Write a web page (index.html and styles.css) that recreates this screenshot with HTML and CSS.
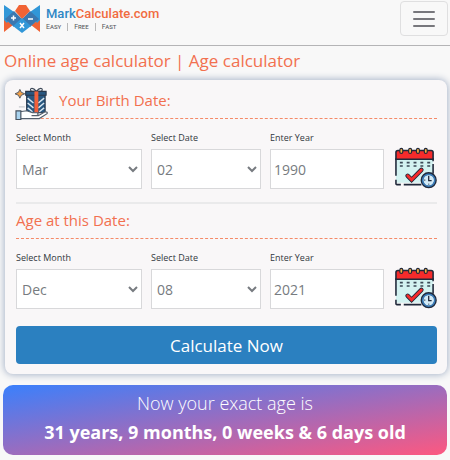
FILE: index.html
```html
<!DOCTYPE html>
<html lang="en">
<head>
    <meta charset="UTF-8">
    <meta name="viewport" content="width=device-width, initial-scale=1.0">
    <title>Online age calculator | Age calculator</title>
    <link rel="stylesheet" href="styles.css">
</head>
<body>
    <svg class="sprite" aria-hidden="true">
        <symbol id="calendar" viewBox="0 0 44 42">
            <path d="M2 8h38v28H2z" fill="#d3f2f1"/>
            <path d="M2 29V11M2 33v4q0 1 1 1h4M10 38h18M40 11v3M40 17v10" fill="none" stroke="#20283a" stroke-width="1.6"/>
            <path d="M2 12V5q0-2 2-2h34q2 0 2 2v7z" fill="#f52b2b" stroke="#20283a" stroke-width="1.6"/>
            <g fill="#f4ad3d" stroke="#20283a" stroke-width="1.2">
                <rect x="6" y="1" width="3" height="5" rx="1.5"/>
                <rect x="15" y="1" width="3" height="5" rx="1.5"/>
                <rect x="23" y="1" width="3" height="5" rx="1.5"/>
                <rect x="31" y="1" width="3" height="5" rx="1.5"/>
            </g>
            <path d="M6 15.500h31M6 19h31" stroke="#3b4856" stroke-width="1.600" stroke-dasharray="3 4"/>
            <path d="M14 29l4 4 10-10" fill="none" stroke="#20283a" stroke-width="4.600" stroke-linecap="round"/>
            <path d="M14 29l4 4 10-10" fill="none" stroke="#f52b2b" stroke-width="2.800" stroke-linecap="round"/>
            <circle cx="35.500" cy="33.500" r="7" fill="#d3ebf7" stroke="#20283a" stroke-width="2.600"/>
            <circle cx="35.500" cy="33.500" r="6.200" fill="none" stroke="#397cb9" stroke-width="1.600"/>
            <path d="M35.500 29v5h3M31 33.500h1M35.500 37v1" fill="none" stroke="#20283a" stroke-width="1.300"/>
        </symbol>
    </svg>

    <header class="navbar">
        <a class="brand" href="#" aria-label="MarkCalculate.com">
            <svg class="brand-logo" viewBox="0 0 36 28" aria-hidden="true">
                <path d="M0 14v13l9-7zM36 14v13l-9-7z" fill="#f16334"/>
                <path d="M0 0v15l3 3 7-11zM36 0v15l-3 3-7-11z" fill="#3197d8"/>
                <path d="M10 6L1 14l9 8 8-8zM26 6l9 8-9 8-8-8z" fill="#3b78b0"/>
                <path d="M11 6l4-6h7l4 6-8 8z" fill="#f16334"/>
                <path d="M18 13L9 21l9 7 9-7z" fill="#3197d8"/>
                <path d="M7 13h5M9.500 10.500v5M24 14h5M16 18l4 5M20 18l-4 5" stroke="#fff" stroke-width="1.500"/>
            </svg>
            <span class="brand-text">
                <span class="brand-name"><span class="brand-mark">Mark</span>Calculate.com</span>
                <span class="brand-tags"><span>Easy</span><span>Free</span><span>Fast</span></span>
            </span>
        </a>
        <button class="menu-toggle" type="button" aria-label="Menu">
            <svg viewBox="0 0 22 16" aria-hidden="true">
                <path d="M1 1h20M1 8h20M1 15h20" stroke="#77777c" stroke-width="2" stroke-linecap="round"/>
            </svg>
        </button>
    </header>

    <main>
        <h1>Online age calculator | Age calculator</h1>

        <form class="card">
            <h2 class="section-title with-icon">
                <svg class="gift" viewBox="0 0 34 34" aria-hidden="true">
                    <path d="M4 2l1.500 3L9 6.500 5.500 8 4 11 2.500 8-1 6.500 2.500 5z" fill="#f3a14a" stroke="#535963" stroke-width="1"/>
                    <path d="M21 4c-4-5-8-3-5 0h10c3-3-1-5-5 0" fill="#fff" stroke="#3d4857" stroke-width="1.200"/>
                    <path d="M10 4h21v4H10zM11 8h19v18H11z" fill="#285780" stroke="#28374b" stroke-width="1.200"/>
                    <path d="M12 11l6 5M12 16l6 5M12 21l5 4M29 11l-6 5M29 16l-6 5M29 21l-5 4" stroke="#d7e6f1" stroke-width="1.500"/>
                    <path d="M19 4h4v22h-4z" fill="#f2603b"/>
                    <path d="M4 25l7-1 6 2h5q2 2-1 3h-5 7l7-4q3 0 2 2l-8 5H4z" fill="#fff" stroke="#535e6b" stroke-width="1.200"/>
                    <path d="M0 24h5v9H0z" fill="#a9d3ef" stroke="#46515e" stroke-width="1.200"/>
                    <path d="M3 20h6" stroke="#b9bdc2"/>
                </svg>
                Your Birth Date:
            </h2>
            <div class="fields">
                <div class="field">
                    <label for="birth-month">Select Month</label>
                    <select id="birth-month">
                        <option>Jan</option>
                        <option>Feb</option>
                        <option selected>Mar</option>
                        <option>Dec</option>
                    </select>
                </div>
                <div class="field">
                    <label for="birth-day">Select Date</label>
                    <select id="birth-day">
                        <option>01</option>
                        <option selected>02</option>
                        <option>03</option>
                    </select>
                </div>
                <div class="field">
                    <label for="birth-year">Enter Year</label>
                    <input id="birth-year" type="text" inputmode="numeric" value="1990">
                </div>
                <svg class="calendar" aria-hidden="true"><use href="#calendar"/></svg>
            </div>

            <hr>

            <h2 class="section-title">Age at this Date:</h2>
            <div class="fields">
                <div class="field">
                    <label for="age-month">Select Month</label>
                    <select id="age-month">
                        <option>Jan</option>
                        <option>Feb</option>
                        <option>Mar</option>
                        <option selected>Dec</option>
                    </select>
                </div>
                <div class="field">
                    <label for="age-day">Select Date</label>
                    <select id="age-day">
                        <option>07</option>
                        <option selected>08</option>
                        <option>09</option>
                    </select>
                </div>
                <div class="field">
                    <label for="age-year">Enter Year</label>
                    <input id="age-year" type="text" inputmode="numeric" value="2021">
                </div>
                <svg class="calendar" aria-hidden="true"><use href="#calendar"/></svg>
            </div>

            <button class="calculate" type="button">Calculate Now</button>
        </form>

        <section class="result">
            <p>Now your exact age is</p>
            <p class="result-age">31 years, 9 months, 0 weeks &amp; 6 days old</p>
        </section>
    </main>
</body>
</html>
```
FILE: styles.css
```css
* {
    box-sizing: border-box;
    margin: 0;
    padding: 0;
}

body {
    font-family: "Open Sans", "Noto Sans", sans-serif;
    background-color: #f8f8f8;
    color: #32383e;
}

.sprite {
    display: none;
}

.navbar {
    display: flex;
    justify-content: space-between;
    align-items: flex-start;
    height: 46px;
    padding: 1px 2px 0 4px;
    border-bottom: 1px solid #b4b4b6;
}

.brand {
    display: flex;
    gap: 6px;
    padding-top: 4px;
    text-decoration: none;
}

.brand-logo {
    width: 36px;
    height: 28px;
}

.brand-text {
    display: flex;
    flex-direction: column;
    font-family: Roboto, sans-serif;
}

.brand-name {
    font-size: 13px;
    font-weight: 500;
    line-height: 18px;
    color: #f16b3f;
}

.brand-mark {
    color: #2f87c5;
}

.brand-tags {
    display: flex;
    font-size: 7px;
    font-variant: small-caps;
    line-height: 8px;
    color: #55585c;
}

.brand-tags span + span {
    margin-left: 6px;
    padding-left: 6px;
    border-left: 1px solid #b8b8b8;
}

.menu-toggle {
    display: flex;
    align-items: center;
    justify-content: center;
    width: 48px;
    height: 35px;
    background: none;
    border: 1px solid #dfdfe0;
    border-radius: 4px;
    cursor: pointer;
}

.menu-toggle svg {
    width: 22px;
    height: 16px;
}

main {
    padding: 0 3px;
}

h1 {
    padding-left: 1px;
    font-size: 17px;
    font-weight: 400;
    line-height: 30px;
    color: #f2704f;
}

.card {
    margin: 4px 0 11px 2px;
    padding: 5px 10px 10px 11px;
    background-color: #f9f7f8;
    border-radius: 8px;
    box-shadow: 0 0 7px 1px #a9b5c9;
}

.section-title {
    padding-bottom: 7px;
    border-bottom: 1px dashed #f58a68;
    font-size: 15px;
    font-weight: 400;
    line-height: 22px;
    color: #f2704f;
}

.with-icon {
    display: flex;
    align-items: flex-start;
    gap: 10px;
    height: 34px;
    padding: 2px 0 0;
    line-height: 26px;
}

.gift {
    width: 33px;
    height: 34px;
    overflow: visible;
}

.fields {
    display: grid;
    grid-template-columns: 126fr 110fr 114fr 44px;
    gap: 9px;
    align-items: end;
    padding-top: 9px;
}

.field {
    display: flex;
    flex-direction: column;
    gap: 1px;
    min-width: 0;
}

label {
    font-size: 9px;
    line-height: 20px;
}

select,
input {
    width: 100%;
    height: 40px;
    background-color: #fff;
    border: 1px solid #d8d8da;
    border-radius: 0;
    font-family: inherit;
    font-size: 14px;
    color: #777b80;
}

select {
    padding: 0 1px;
}

input {
    padding: 0 3px;
}

.calendar {
    justify-self: end;
    width: 43px;
    height: 42px;
}

hr {
    margin: 13px 0 5px;
    border: 0;
    border-top: 2px solid #eaeaeb;
}

.calculate {
    display: block;
    width: 100%;
    height: 38px;
    margin-top: 17px;
    background-color: #2b80c0;
    border: 0;
    border-radius: 4px;
    font-family: inherit;
    font-size: 17px;
    color: #fff;
    cursor: pointer;
}

.result {
    padding: 4px 8px 8px;
    background: linear-gradient(to bottom right, #3a80fc, #fd5880);
    border-radius: 10px;
    font-size: 18px;
    font-weight: 300;
    line-height: 29px;
    text-align: center;
    color: #fff;
}

.result-age {
    font-weight: 700;
}
```
